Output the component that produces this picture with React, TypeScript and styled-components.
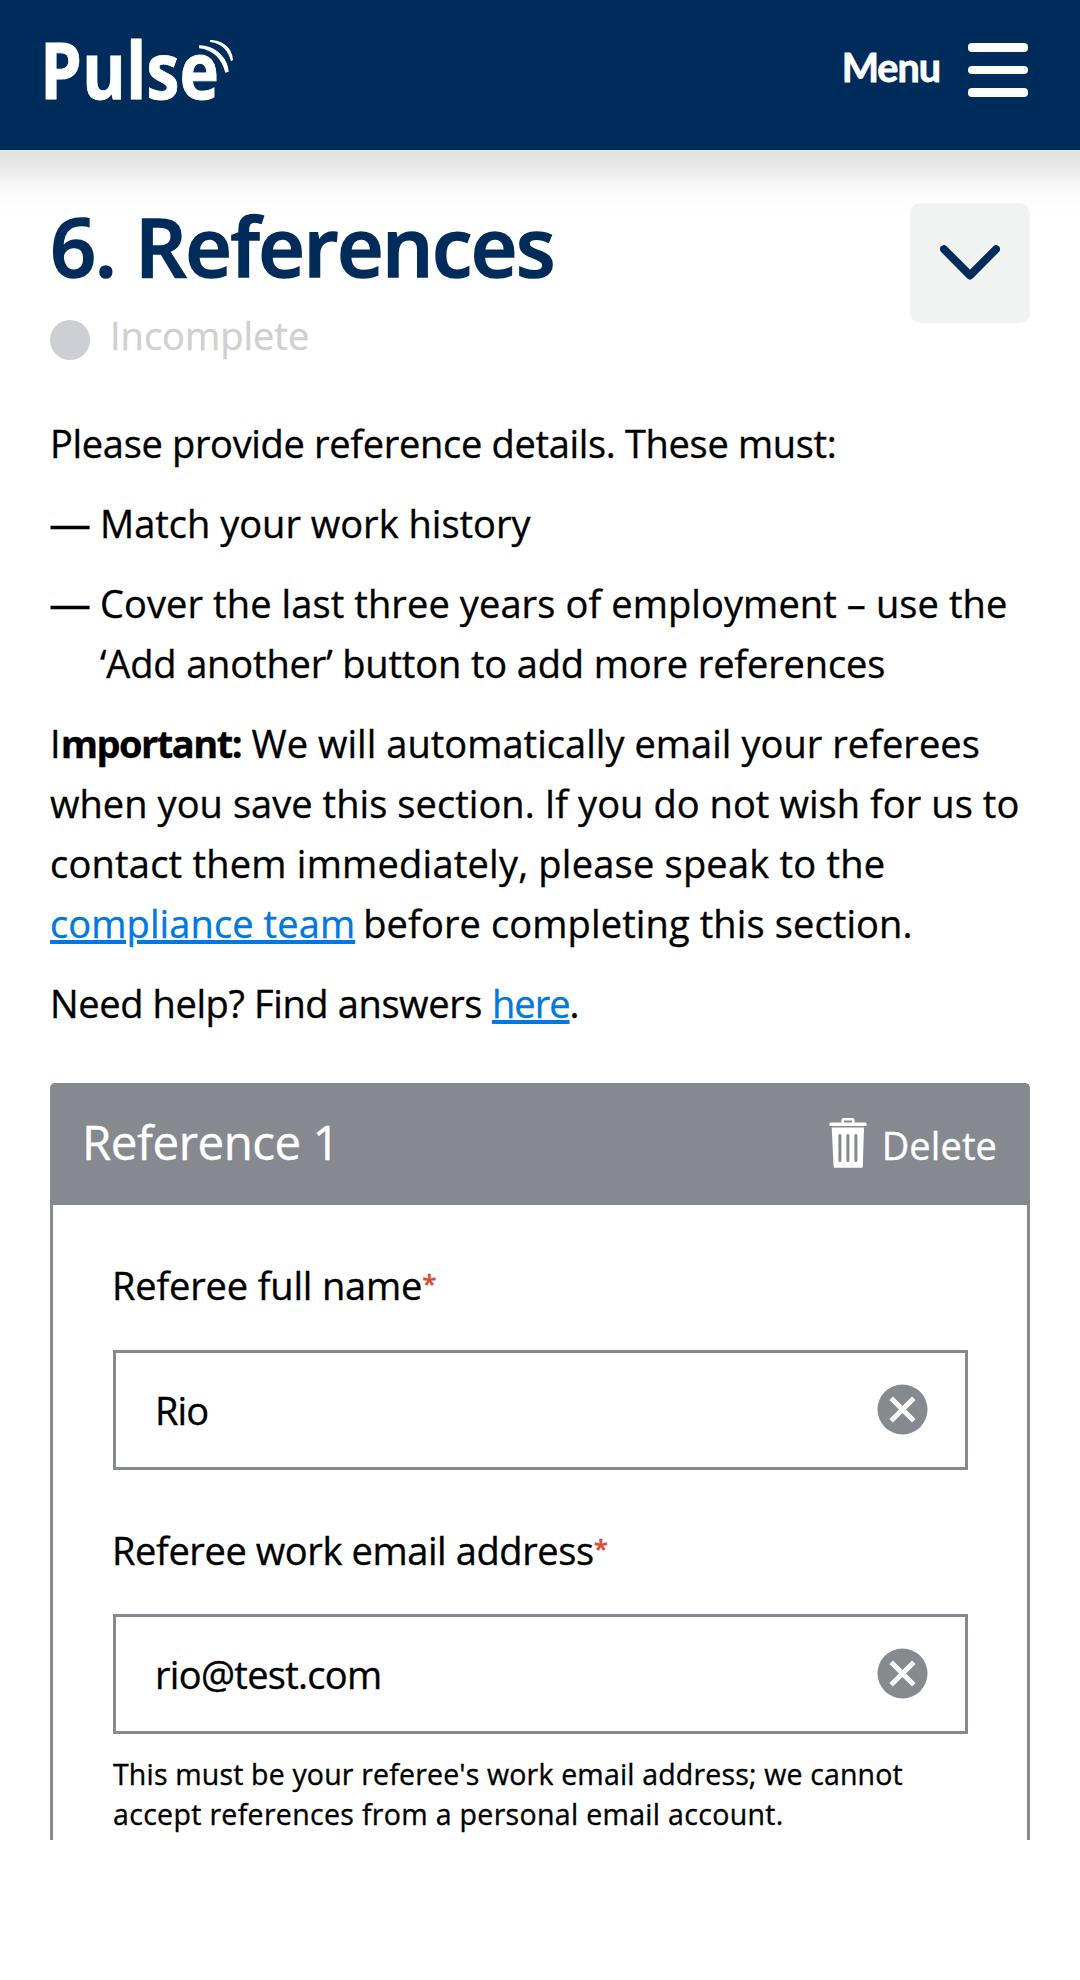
import React from 'react';
import styled, { createGlobalStyle } from 'styled-components';

const navy = '#002c5b';
const grey = '#868990';

const GlobalStyle = createGlobalStyle`
  * { box-sizing: border-box; }
  body {
    margin: 0;
    background: #fff;
    color: #000;
    font-family: "Open Sans", "Noto Sans", sans-serif;
    font-size: 38px;
    line-height: 60px;
    -webkit-text-stroke: 0.35px currentColor;
  }
  button, input { font: inherit; }
`;

const Page = styled.div`
  width: 1080px;
  min-height: 1980px;
  display: flex;
  flex-direction: column;
`;

const TopBar = styled.header`
  height: 150px;
  padding: 0 52px 0 30px;
  display: flex;
  align-items: flex-start;
  justify-content: space-between;
  background: ${navy};
`;

const Logo = styled.svg`
  display: block;
  overflow: visible;
  fill: #fff;
  font-family: "Open Sans", sans-serif;
  font-size: 78px;
  font-weight: 700;
  line-height: 1.2;
  -webkit-text-stroke: 0;
`;

const LogoText = styled.text`
  stroke: #fff;
  stroke-width: 0.8px;
`;

const MenuButton = styled.button`
  display: flex;
  align-items: flex-start;
  gap: 28px;
  margin-top: 43px;
  padding: 0;
  border: 0;
  background: none;
  color: #fff;
`;

const MenuLabel = styled.span`
  font-family: Lato, sans-serif;
  font-size: 39.5px;
  font-weight: 700;
  line-height: 48px;
  letter-spacing: -1px;
  -webkit-text-stroke: 0.8px #fff;
`;

const Bars = styled.span`
  display: flex;
  flex-direction: column;
  gap: 14px;
`;

const Bar = styled.span`
  width: 60px;
  height: 8.6px;
  border-radius: 4px;
  background: #fff;
`;

const Content = styled.main`
  flex: 1;
  padding: 50px 50px 0;
  background: linear-gradient(
      #e2e2e2 0,
      #e6e6e6 12px,
      #ececec 22px,
      #f5f5f5 31px,
      #fbfbfb 41px,
      #fdfdfd 52px,
      #fff 66px
    )
    no-repeat;
`;

const SectionHead = styled.div`
  display: flex;
  justify-content: space-between;
  align-items: flex-start;
  margin-bottom: 48px;
`;

const Title = styled.h1`
  margin: 0;
  color: ${navy};
  font-size: 81px;
  font-weight: 600;
  line-height: 92px;
  letter-spacing: -1.5px;
  -webkit-text-stroke: 1.6px ${navy};
`;

const Status = styled.div`
  display: flex;
  align-items: flex-start;
  gap: 20px;
  margin-top: 13px;
  color: #d0d0d0;
`;

const StatusDot = styled.span`
  width: 40px;
  height: 40px;
  margin-top: 15px;
  border-radius: 50%;
  background: #cecfd4;
`;

const Toggle = styled.button`
  width: 120px;
  height: 120px;
  margin-top: 3px;
  padding: 0;
  display: grid;
  place-items: center;
  border: 0;
  border-radius: 10px;
  background: #f1f3f2;
`;

const Copy = styled.div`
  display: flex;
  flex-direction: column;
  gap: 20px;
`;

const Paragraph = styled.p`
  margin: 0;
`;

const List = styled.ul`
  display: flex;
  flex-direction: column;
  gap: 20px;
  margin: 0;
  padding: 0;
  list-style: none;
`;

const Item = styled.li`
  display: grid;
  grid-template-columns: 50px 1fr;
`;

const Dash = styled.span`
  font-size: 42px;
  margin-left: -1px;
`;

const Line = styled.span`
  display: flex;
  height: 60px;
  white-space: pre;
`;

const Run = styled.span<{ $track?: number; $gap?: number }>`
  letter-spacing: ${(p) => p.$track ?? 0}px;
  margin-left: ${(p) => p.$gap ?? 0}px;
`;

const Strong = styled(Run).attrs({ as: 'strong' })`
  font-weight: 700;
`;

const Link = styled.a<{ $track?: number; $gap?: number }>`
  letter-spacing: ${(p) => p.$track ?? 0}px;
  margin-left: ${(p) => p.$gap ?? 0}px;
  color: #0078e1;
  text-decoration: underline;
  text-decoration-thickness: 4px;
  text-underline-offset: 2px;
`;

const Card = styled.section`
  margin-top: 50px;
  height: 757px;
  border: solid ${grey};
  border-width: 3px 3px 0;
  border-radius: 5px 5px 0 0;
`;

const CardHead = styled.div`
  height: 119px;
  padding: 0 30px 3px 29px;
  display: flex;
  align-items: center;
  justify-content: space-between;
  background: ${grey};
  color: #fff;
`;

const CardTitle = styled.h2`
  margin: 0 0 4px;
  font-size: 47.5px;
  font-weight: 400;
  letter-spacing: -0.5px;
`;

const DeleteButton = styled.button`
  display: flex;
  align-items: center;
  gap: 15px;
  padding: 2px 0 0;
  border: 0;
  background: none;
  color: #fff;
  letter-spacing: 0.1px;
`;

const TrashIcon = styled.svg`
  display: block;
  margin-bottom: 4px;
`;

const Fields = styled.div`
  display: flex;
  flex-direction: column;
  gap: 50px;
  padding: 50px 59px 0 60px;
`;

const Field = styled.div`
  display: flex;
  flex-direction: column;
`;

const Label = styled.label<{ $track: number }>`
  height: 60px;
  margin: 0 0 34.5px -1px;
  letter-spacing: ${(p) => p.$track}px;
  white-space: nowrap;
`;

const Required = styled.span`
  color: #d84c34;
  font-size: 26px;
  font-weight: 600;
  line-height: 0;
  vertical-align: 7px;
`;

const InputBox = styled.div`
  height: 120px;
  padding: 0 37px 0 39px;
  display: flex;
  align-items: center;
  border: 3px solid ${grey};
`;

const Input = styled.input<{ $track: number }>`
  flex: 1;
  min-width: 0;
  height: 60px;
  padding: 0;
  border: 0;
  outline: 0;
  background: none;
  color: #000;
  letter-spacing: ${(p) => p.$track}px;
`;

const ClearIcon = styled.svg`
  display: block;
  margin-bottom: 1px;
`;

const Hint = styled.p`
  margin: 20px 0 0;
  font-size: 28.5px;
  line-height: 40px;
  white-space: nowrap;
`;

const HintLine = styled.span<{ $track: number }>`
  display: block;
  letter-spacing: ${(p) => p.$track}px;
`;

const Trash = () => (
  <TrashIcon width="38" height="50" viewBox="0 0 38 50">
    <path d="M13.8 6V2.2q0-1 1-1h8.4q1 0 1 1V6" fill="none" stroke="#fff" strokeWidth="2.6" />
    <rect x="0.3" y="4.6" width="37.4" height="3.4" rx="1.6" fill="#fff" />
    <path d="M2.7 9.4H35L33.8 48.6q0 1.2-1.2 1.2H5.8q-1.2 0-1.2-1.2Z" fill="#fff" />
    <g fill={grey}>
      <rect x="9.4" y="16" width="3" height="28" rx="1.5" />
      <rect x="17.4" y="16" width="3" height="28" rx="1.5" />
      <rect x="25.4" y="16" width="3" height="28" rx="1.5" />
    </g>
  </TrashIcon>
);

const Clear = () => (
  <ClearIcon width="51" height="51" viewBox="0 0 51 51">
    <circle cx="25.5" cy="25.5" r="25" fill={grey} />
    <path d="M14.2 14.2 36.8 36.8M36.8 14.2 14.2 36.8" stroke="#fff" strokeWidth="5" />
  </ClearIcon>
);

type TextFieldProps = {
  label: string;
  labelTrack: number;
  value: string;
  valueTrack: number;
  children?: React.ReactNode;
};

const TextField = ({ label, labelTrack, value, valueTrack, children }: TextFieldProps) => (
  <Field>
    <Label $track={labelTrack}>
      {label}
      <Required>*</Required>
    </Label>
    <InputBox>
      <Input $track={valueTrack} defaultValue={value} />
      <Clear />
    </InputBox>
    {children}
  </Field>
);

export default function App() {
  return (
    <Page>
      <GlobalStyle />
      <TopBar>
        <Logo width="220" height="150" viewBox="30 0 220 150">
          <LogoText x="40" y="99" textLength="179" lengthAdjust="spacingAndGlyphs">
            Pulse
          </LogoText>
          <path d="M199 45.3C214 45 228 57 228.7 71.7L225.3 72.7C222 59 213 49.5 199 48.3Z" />
          <path d="M210 40C223 40 232.5 48.5 233 60L231 61.3C228.5 51 222 43.5 210 42Z" />
        </Logo>
        <MenuButton>
          <MenuLabel>Menu</MenuLabel>
          <Bars>
            <Bar />
            <Bar />
            <Bar />
          </Bars>
        </MenuButton>
      </TopBar>
      <Content>
        <SectionHead>
          <div>
            <Title>6. References</Title>
            <Status>
              <StatusDot />
              <Run>Incomplete</Run>
            </Status>
          </div>
          <Toggle aria-label="Collapse section">
            <svg width="60" height="36" viewBox="0 0 60 36">
              <path
                d="M4 4.2 30 30.4 56 4.2"
                fill="none"
                stroke={navy}
                strokeWidth="8"
                strokeLinecap="round"
                strokeLinejoin="round"
              />
            </svg>
          </Toggle>
        </SectionHead>
        <Copy>
          <Paragraph>
            <Line>
              <Run $track={-0.32}>Please provide reference details. These must:</Run>
            </Line>
          </Paragraph>
          <List>
            <Item>
              <Dash>—</Dash>
              <Line>
                <Run>Match your work history</Run>
              </Line>
            </Item>
            <Item>
              <Dash>—</Dash>
              <div>
                <Line>
                  <Run $track={0.1}>Cover the last three years of employment – use the</Run>
                </Line>
                <Line>
                  <Run $track={-0.14}>‘Add another’ button to add more references</Run>
                </Line>
              </div>
            </Item>
          </List>
          <Paragraph>
            <Line>
              <Run>I</Run>
              <Strong $track={-1.5}>mportant:</Strong>
              <Run $gap={10.5} $track={0.04}>
                We will automatically email your referees
              </Run>
            </Line>
            <Line>
              <Run $track={0.06}>when you save this section. If you do not wish for us to</Run>
            </Line>
            <Line>
              <Run $track={0.23}>contact them immediately, please speak to the</Run>
            </Line>
            <Line>
              <Link $track={0.1}>compliance team</Link>
              <Run $gap={8} $track={0.12}>
                before completing this section.
              </Run>
            </Line>
          </Paragraph>
          <Paragraph>
            <Line>
              <Run $track={-0.38}>Need help? Find answers</Run>
              <Link $gap={10} $track={-1}>
                here
              </Link>
              <Run>.</Run>
            </Line>
          </Paragraph>
        </Copy>
        <Card>
          <CardHead>
            <CardTitle>Reference 1</CardTitle>
            <DeleteButton>
              <Trash />
              Delete
            </DeleteButton>
          </CardHead>
          <Fields>
            <TextField label="Referee full name" labelTrack={-0.17} value="Rio" valueTrack={-0.9} />
            <TextField
              label="Referee work email address"
              labelTrack={-0.4}
              value="rio@test.com"
              valueTrack={-0.69}
            >
              <Hint>
                <HintLine $track={0.17}>This must be your referee's work email address; we cannot</HintLine>
                <HintLine $track={0.32}>accept references from a personal email account.</HintLine>
              </Hint>
            </TextField>
          </Fields>
        </Card>
      </Content>
    </Page>
  );
}
